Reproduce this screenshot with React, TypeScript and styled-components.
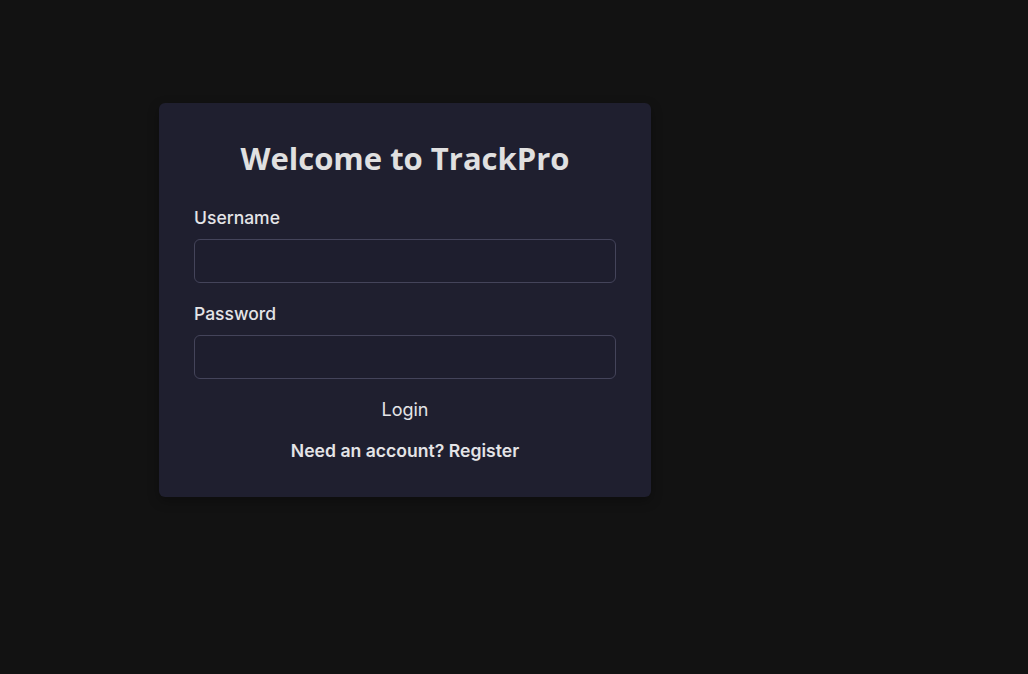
import React from "react";
import styled, { createGlobalStyle } from "styled-components";

const Global = createGlobalStyle`
  html, body { margin: 0; padding: 0; background: #121212; }
  body { font-family: Inter, "Liberation Sans", sans-serif; color: #e4e4e7; }
  * { box-sizing: border-box; }
`;

const Page = styled.div`
  min-height: 674px;
  padding: 103px 0 0 159px;
`;

const Card = styled.form`
  width: 492px;
  height: 394px;
  background: #1f1f2f;
  border-radius: 6px;
  padding: 33px 35px 0;
  box-shadow: 0 4px 12px rgba(0, 0, 0, 0.3);
  display: flex;
  flex-direction: column;
`;

const Title = styled.h1`
  margin: 0 0 27px;
  text-align: center;
  font-family: "Open Sans", "Noto Sans", sans-serif;
  font-weight: 700;
  font-size: 31px;
  line-height: 44px;
  color: #e0e0e0;
`;

const Label = styled.label`
  display: block;
  font-size: 17.5px;
  font-weight: 500;
  line-height: 22px;
  margin-bottom: 10px;
  color: #e4e4e7;
`;

const Field = styled.div<{ $gap?: number }>`
  margin-bottom: ${(p) => p.$gap ?? 20}px;
`;

const Input = styled.input`
  display: block;
  width: 100%;
  height: 44px;
  background: #1e1e2e;
  border: 1px solid #44445a;
  border-radius: 6px;
  color: #e4e4e7;
  font-family: inherit;
  font-size: 16px;
  padding: 0 12px;
  outline: none;
`;

const LoginButton = styled.button`
  align-self: center;
  background: transparent;
  border: none;
  color: #e4e4e7;
  font-family: Inter, sans-serif;
  font-size: 18px;
  font-weight: 400;
  line-height: 24px;
  padding: 0;
  margin-top: -1px;
  cursor: pointer;
`;

const Switch = styled.button`
  align-self: center;
  background: transparent;
  border: none;
  color: #e4e4e7;
  font-family: Inter, sans-serif;
  font-size: 17.6px;
  font-weight: 600;
  line-height: 24px;
  padding: 0;
  margin-top: 17px;
  cursor: pointer;
`;

export default function App() {
  return (
    <>
      <Global />
      <Page>
        <Card onSubmit={(e) => e.preventDefault()}>
          <Title>Welcome to TrackPro</Title>
          <Field>
            <Label>Username</Label>
            <Input type="text" />
          </Field>
          <Field>
            <Label>Password</Label>
            <Input type="password" />
          </Field>
          <LoginButton type="submit">Login</LoginButton>
          <Switch type="button">Need an account? Register</Switch>
        </Card>
      </Page>
    </>
  );
}
